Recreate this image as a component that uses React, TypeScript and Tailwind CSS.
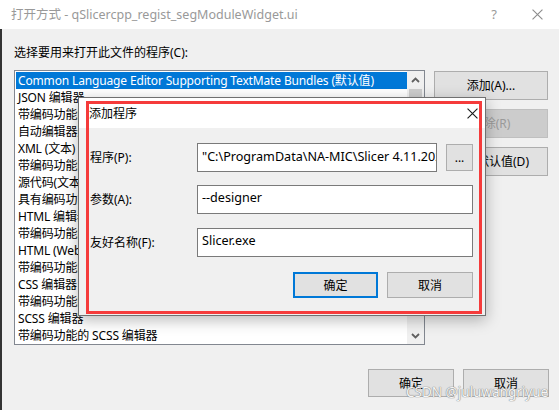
import React from 'react';

const programs = [
  'Common Language Editor Supporting TextMate Bundles (默认值)',
  'JSON 编辑器',
  '带编码功能的 JSON 编辑器',
  '自动编辑器选择器',
  'XML (文本) 编辑器',
  '带编码功能的 XML (文本) 编辑器',
  '源代码(文本)编辑器',
  '具有编码功能的源代码(文本)编辑器',
  'HTML 编辑器',
  '带编码功能的 HTML 编辑器',
  'HTML (Web 窗体) 编辑器',
  '带编码功能的 HTML (Web 窗体) 编辑器',
  'CSS 编辑器',
  '带编码功能的 CSS 编辑器',
  'SCSS 编辑器',
  '带编码功能的 SCSS 编辑器',
];

const CloseIcon = ({ color, size }: { color: string; size: number }) => (
  <svg width={size} height={size} viewBox="0 0 10 10">
    <path d="M0.5 0.5 L9.5 9.5 M9.5 0.5 L0.5 9.5" stroke={color} strokeWidth="1" fill="none" />
  </svg>
);

const Chevron = ({ up }: { up?: boolean }) => (
  <svg width="9" height="6" viewBox="0 0 9 6">
    <path
      d={up ? 'M1 5 L4.5 1.5 L8 5' : 'M1 1 L4.5 4.5 L8 1'}
      stroke="#606060"
      strokeWidth="1.8"
      fill="none"
    />
  </svg>
);

const WinButton = ({ label, className = '' }: { label: string; className?: string }) => (
  <div
    className={`flex items-center justify-center border border-[#adadad] bg-[#e1e1e1] ${className}`}
  >
    {label}
  </div>
);

export default function App() {
  return (
    <div className="relative w-[559px] h-[410px] overflow-hidden bg-[#f0f0f0] font-['Noto_Sans','Noto_Sans_CJK_SC',sans-serif] text-[12px] leading-[17px] text-black">
      {/* Title bar */}
      <div className="flex h-[29px] items-center bg-white pl-[11px]">
        <span className="flex-1 text-[12.5px] text-[#999999]">
          打开方式 - qSlicercpp_regist_segModuleWidget.ui
        </span>
        <span className="w-[42px] text-center text-[13px] text-[#999999]">?</span>
        <span className="flex w-[44px] justify-center">
          <CloseIcon color="#8c8c8c" size={11} />
        </span>
      </div>

      <div className="flex h-[381px]">
        <div className="w-[2px] bg-[#333333]" />
        <div className="flex flex-1 flex-col pl-[12px]">
          <div className="mt-[15px]">选择要用来打开此文件的程序(C):</div>

          <div className="mt-[9px] flex gap-[9px]">
            {/* Program list */}
            <div className="flex h-[275px] w-[411px] border border-[#828790] bg-white pl-px pt-px">
              <div className="w-[391px] overflow-hidden tracking-[-0.15px]">
                {programs.map((p, i) => (
                  <div
                    key={i}
                    className={`h-[17px] whitespace-nowrap pl-[2px] ${
                      i === 0 ? 'bg-[#0078d7] text-white' : ''
                    }`}
                  >
                    {p}
                  </div>
                ))}
              </div>
              <div className="-mt-px flex w-[17px] flex-col bg-[#f0f0f0]">
                <div className="flex h-[18px] items-center justify-center">
                  <Chevron up />
                </div>
                <div className="mx-[2px] h-[160px] bg-[#cdcdcd]" />
                <div className="flex-1" />
                <div className="flex h-[17px] items-center justify-center">
                  <Chevron />
                </div>
              </div>
            </div>

            {/* Side buttons */}
            <div className="mt-px flex w-[114px] flex-col gap-[9px]">
              <WinButton label="添加(A)..." className="h-[29px]" />
              <div className="flex h-[29px] items-center justify-center border border-[#bfbfbf] bg-[#cccccc] text-[#9a9a9a]">
                删除(R)
              </div>
              <WinButton label="设为默认值(D)" className="h-[29px]" />
            </div>
          </div>

          <div className="mt-[24px] flex justify-end gap-[9px] pr-[10px]">
            <WinButton label="确定" className="h-[28px] w-[86px]" />
            <WinButton label="取消" className="h-[28px] w-[86px]" />
          </div>
        </div>
      </div>

      {/* Add program dialog */}
      <div className="absolute left-[78px] top-[97px] flex h-[219px] w-[408px] flex-col border border-[#707070] bg-[#f0f0f0] shadow-[0_4px_14px_rgba(0,0,0,0.28)]">
        <div className="flex h-[30px] items-center justify-between bg-white pl-[10px] pr-[7px]">
          <span>添加程序</span>
          <CloseIcon color="#1a1a1a" size={11} />
        </div>
        <div className="flex flex-col pl-[11px] pr-[12px] pt-[15px]">
          <div className="flex h-[29px] items-center">
            <span className="w-[107px]">程序(P):</span>
            <div className="flex h-[29px] flex-1 items-center overflow-hidden whitespace-nowrap border border-[#7a7a7a] bg-white pb-[2px] pl-[4px] text-[12.6px]">
              "C:\ProgramData\NA-MIC\Slicer 4.11.20210226\Slicer.exe"
            </div>
            <WinButton label="..." className="ml-[9px] h-[27px] w-[27px]" />
          </div>
          <div className="mt-[13px] flex h-[29px] items-center">
            <span className="w-[107px]">参数(A):</span>
            <div className="flex h-[29px] flex-1 items-center border border-[#7a7a7a] bg-white pb-[4px] pl-[4px] text-[12.6px]">
              --designer
            </div>
          </div>
          <div className="mt-[14px] flex h-[29px] items-center">
            <span className="w-[107px]">友好名称(F):</span>
            <div className="flex h-[29px] flex-1 items-center border border-[#7a7a7a] bg-white pb-[4px] pl-[4px] text-[12.6px]">
              Slicer.exe
            </div>
          </div>
          <div className="mt-[15px] flex justify-end gap-[9px]">
            <div className="flex h-[26px] w-[85px] items-center justify-center border-2 border-[#0078d7] bg-[#e1e1e1]">
              确定
            </div>
            <WinButton label="取消" className="h-[26px] w-[86px]" />
          </div>
        </div>
      </div>

      {/* Red annotation frame */}
      <div className="absolute left-[86px] top-[101px] h-[213px] w-[396px] border-[3px] border-[#f53b3b]" />

      {/* Watermark */}
      <div className="absolute left-[406px] top-[383px] text-[13.5px] leading-[18px] text-[#f6f6f6] [text-shadow:0_0_1px_#7a7a7a,0_0_1px_#7a7a7a]">
        CSDN @juluwangriyue
      </div>
    </div>
  );
}
